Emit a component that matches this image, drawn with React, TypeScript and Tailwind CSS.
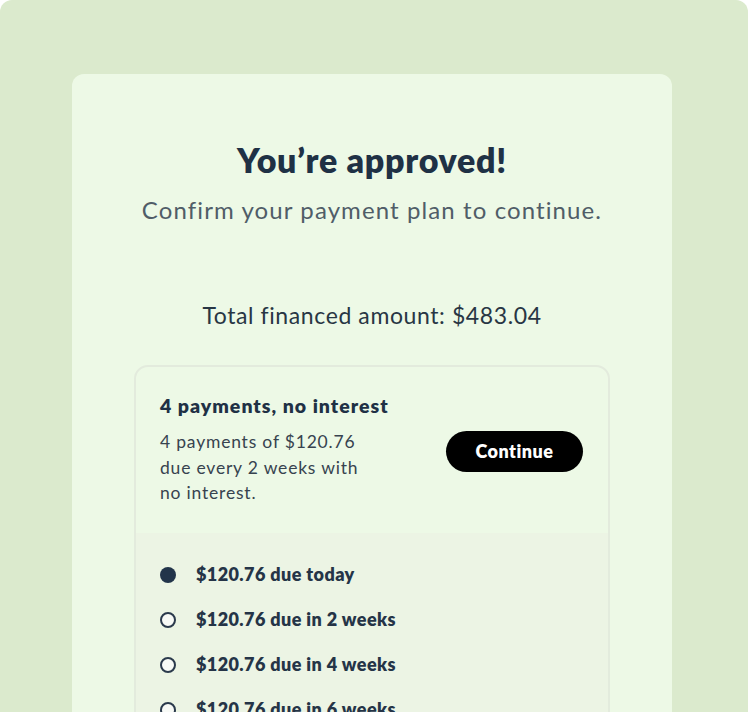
import React from 'react';

const installments = [
    { label: '$120.76 due today', paid: true },
    { label: '$120.76 due in 2 weeks', paid: false },
    { label: '$120.76 due in 4 weeks', paid: false },
    { label: '$120.76 due in 6 weeks', paid: false },
];

export default function App() {
    return (
        <div
            className="h-[712px] w-[748px] overflow-hidden rounded-t-[12px] bg-[#dbeacd] pt-[74px] pl-[72px]"
            style={{ fontFamily: 'Lato, "Noto Sans", sans-serif' }}
        >
            <div className="h-[700px] w-[600px] rounded-[12px] bg-[#edf9e6] px-[62px] pt-[64px]">
                <h1 className="text-center text-[34px] leading-[44px] font-extrabold tracking-[0.7px] text-[#1f3145]">
                    You’re approved!
                </h1>
                <p className="mt-[14px] text-center text-[24px] leading-[28px] tracking-[1.1px] text-[#505d68]">
                    Confirm your payment plan to continue.
                </p>

                <p className="mt-[77px] text-center text-[23px] leading-[28px] tracking-[0.6px] text-[#283644]">
                    Total financed amount: $483.04
                </p>

                <div className="mt-[36px] overflow-hidden rounded-[14px] border-2 border-[#e3ebdd]">
                    <div className="flex items-center justify-between px-[24px] pt-[26px] pb-[27px]">
                        <div>
                            <h2 className="text-[19.5px] leading-[26px] font-extrabold tracking-[1px] text-[#1f3145]">
                                4 payments, no interest
                            </h2>
                            <p className="mt-[10px] w-[215px] text-[17.5px] leading-[25.5px] tracking-[0.8px] text-[#37434f]">
                                4 payments of $120.76 due every 2 weeks with
                                no interest.
                            </p>
                        </div>
                        <button className="mt-[4px] mr-[1px] h-[41px] w-[137px] rounded-full bg-black text-[18px] font-extrabold tracking-[0.5px] text-white">
                            Continue
                        </button>
                    </div>
                    <div className="bg-[#ecf4e4] px-[24px] pt-[29px] pb-[40px]">
                        <ul className="flex flex-col gap-[19px]">
                            {installments.map((item) => (
                                <li
                                    key={item.label}
                                    className="flex h-[26px] items-center gap-[20px]"
                                >
                                    <span
                                        className={
                                            item.paid
                                                ? 'h-[16px] w-[16px] rounded-full bg-[#22344a]'
                                                : 'h-[16px] w-[16px] rounded-full border-2 border-[#2b3a4c] bg-[#f8faf6]'
                                        }
                                    />
                                    <span className="text-[18px] font-extrabold tracking-[0.4px] text-[#253447]">
                                        {item.label}
                                    </span>
                                </li>
                            ))}
                        </ul>
                    </div>
                </div>
            </div>
        </div>
    );
}
